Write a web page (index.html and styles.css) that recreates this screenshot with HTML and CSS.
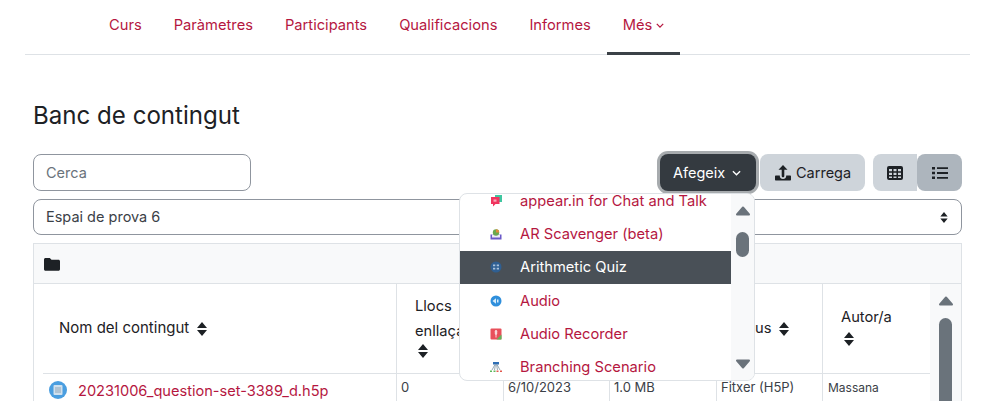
FILE: index.html
```html
<!DOCTYPE html>
<html lang="ca">
<head>
<meta charset="utf-8">
<title>Banc de contingut</title>
<link rel="stylesheet" href="styles.css">
</head>
<body>
<nav class="tabs">
  <a class="tab">Curs</a>
  <a class="tab">Paràmetres</a>
  <a class="tab">Participants</a>
  <a class="tab">Qualificacions</a>
  <a class="tab">Informes</a>
  <a class="tab active">Més <svg class="caret" viewBox="0 0 10 6" width="8" height="5"><path d="M1 1l4 4 4-4" fill="none" stroke="currentColor" stroke-width="1.6"/></svg></a>
</nav>
<main class="content">
  <h1 class="title">Banc de contingut</h1>
  <div class="toolbar">
    <input class="search" placeholder="Cerca">
    <div class="actions">
      <button class="btn add">Afegeix <svg class="caret light" viewBox="0 0 10 6" width="9" height="6"><path d="M1 1l4 4 4-4" fill="none" stroke="currentColor" stroke-width="1.5"/></svg></button>
      <button class="btn upload"><svg viewBox="0 0 16 16" width="16" height="16"><path d="M8 0l4.500 4.800H9.300V11c0 .8-.6 1.300-1.300 1.300S6.700 11.800 6.700 11V4.800H3.500z M1 10.500h3.800v.6c0 1.700 1.400 3 3.200 3s3.200-1.300 3.200-3v-.6H15c.6 0 1 .4 1 1v3c0 .6-.4 1-1 1H1c-.6 0-1-.4-1-1v-3c0-.6.4-1 1-1z" fill="#1d2125"/></svg>Carrega</button>
      <div class="views">
        <button class="view"><svg viewBox="0 0 16 14" width="16" height="14"><path fill-rule="evenodd" d="M2 0h12a2 2 0 0 1 2 2v10a2 2 0 0 1-2 2H2a2 2 0 0 1-2-2V2a2 2 0 0 1 2-2z M2 3v2.300h3V3z M6.500 3v2.300h3V3z M11 3v2.300h3V3z M2 6.800v2.300h3V6.800z M6.500 6.800v2.300h3V6.800z M11 6.800v2.300h3V6.800z M2 10.500V12h3v-1.500z M6.500 10.500V12h3v-1.500z M11 10.500V12h3v-1.500z" fill="#1d2125"/></svg></button>
        <button class="view on"><svg viewBox="0 0 16 14" width="16" height="14"><path d="M0 1h3v2.400H0z M0 5.800h3v2.400H0z M0 10.600h3V13H0z M5 1.300h11v1.800H5z M5 6.100h11v1.800H5z M5 10.900h11v1.800H5z" fill="#1d2125"/></svg></button>
      </div>
    </div>
  </div>
  <div class="select">
    <span>Espai de prova 6</span>
    <svg class="sort" viewBox="0 0 8 12" width="8" height="11"><path d="M4 0l4 4.800H0z M4 12L0 7.200h8z" fill="#1d2125"/></svg>
  </div>
  <section class="bank">
    <div class="crumbs"><svg viewBox="0 0 16 14" width="16" height="14"><path d="M1.500 1h4.300l1.700 1.800h7c.8 0 1.500.7 1.500 1.500v8c0 .8-.7 1.500-1.500 1.500h-13C.7 13.800 0 13.100 0 12.300V2.500C0 1.700.7 1 1.500 1z" fill="#1d2125"/></svg></div>
    <div class="body">
      <div class="grid">
        <div class="th first">Nom del contingut <svg class="sort" viewBox="0 0 10 14" width="10" height="14"><path d="M5 0l5 6H0z M5 14L0 8h10z" fill="#1d2125"/></svg></div>
        <div class="th stack"><span>Llocs<br>enllaçats</span><svg class="sort" viewBox="0 0 10 14" width="10" height="14"><path d="M5 0l5 6H0z M5 14L0 8h10z" fill="#1d2125"/></svg></div>
        <div class="th"></div>
        <div class="th"></div>
        <div class="th">Tipus <svg class="sort" viewBox="0 0 10 14" width="10" height="14"><path d="M5 0l5 6H0z M5 14L0 8h10z" fill="#1d2125"/></svg></div>
        <div class="th stack author"><span>Autor/a</span><svg class="sort" viewBox="0 0 10 14" width="10" height="14"><path d="M5 0l5 6H0z M5 14L0 8h10z" fill="#1d2125"/></svg></div>
        <div class="td name"><svg viewBox="0 0 18 18" width="18" height="18"><circle cx="9" cy="9" r="9" fill="#4a9ee0"/><rect x="4.500" y="4" width="9" height="10" rx="1" fill="#cfe0ee"/><path d="M6 7h6M6 9h6M6 11h6" stroke="#8fa6b8"/></svg><a>20231006_question-set-3389_d.h5p</a></div>
        <div class="td">0</div>
        <div class="td">6/10/2023</div>
        <div class="td">1.0 MB</div>
        <div class="td">Fitxer (H5P)</div>
        <div class="td small">Massana</div>
      </div>
      <div class="rail">
        <svg class="arrow" viewBox="0 0 16 10" width="16" height="10"><path d="M8 1.500l6 7H2z"/></svg>
        <div class="thumb"></div>
      </div>
    </div>
  </section>
</main>
<div class="menu">
  <ul class="items">
    <li class="item"><svg viewBox="0 0 12 12" width="12" height="12"><path d="M5 0h7v7H5z" fill="#3fc6a0"/><path d="M1 2h8.500v7H5.500l-2.500 2.500V9H1z" fill="#f0355f"/><rect x="3.500" y="4.500" width="3" height="2.200" fill="#f7a8b8"/></svg>appear.in for Chat and Talk</li>
    <li class="item"><svg viewBox="0 0 12 12" width="12" height="12"><path d="M.5 6.500h11V11.500H.5z" fill="#6a59c8"/><path d="M2 6.500h8v3H2z" fill="#ece9f8"/><circle cx="6" cy="4.500" r="3.200" fill="#6aa84f"/><path d="M6 1.300a3.200 3.200 0 0 1 3.200 3.200H6z" fill="#e08a3c"/></svg>AR Scavenger (beta)</li>
    <li class="item current"><svg viewBox="0 0 12 12" width="12" height="12"><circle cx="6" cy="6" r="5.500" fill="#2f5f92"/><path d="M3 3.500h2.300v1.800H3z M6.700 3.500H9v1.800H6.700z M3 6.700h2.300v1.800H3z M6.700 6.700H9v1.800H6.700z" fill="#a9c1da"/></svg>Arithmetic Quiz</li>
    <li class="item"><svg viewBox="0 0 12 12" width="12" height="12"><circle cx="6" cy="6" r="5.500" fill="#2f8fdc"/><path d="M2.500 6L6 3.200v5.600z M7 4.500h1.500v3H7z" fill="#d8ecfa"/></svg>Audio</li>
    <li class="item"><svg viewBox="0 0 12 12" width="12" height="12"><rect x=".5" y=".5" width="11" height="11" rx="1" fill="#e8505b"/><rect x="4.800" y="2" width="2.400" height="5" rx="1.200" fill="#f8d5d8"/><path d="M6 7v2.500" stroke="#f8d5d8"/><path d="M11.500 6.500v5h-5z" fill="#5cb85c"/></svg>Audio Recorder</li>
    <li class="item"><svg viewBox="0 0 12 12" width="12" height="12"><rect x="3" y="1" width="6" height="2.500" fill="#2f6fb5"/><path d="M5 3.500L2 9M7 3.500L10 9M5.500 3.500L4.500 9M6.500 3.500L7.500 9" stroke="#6f8596" stroke-width=".7" fill="none"/><path d="M0 9.500h2v1.500H0z M3.500 9.500h2v1.500h-2z" fill="#5cb85c"/><path d="M6.500 9.500h2v1.500h-2z M10 9.500h2v1.500h-2z" fill="#e2574c"/></svg>Branching Scenario</li>
  </ul>
  <div class="menu-rail">
    <svg class="arrow" viewBox="0 0 16 10" width="16" height="10"><path d="M8 1.500l6 7H2z"/></svg>
    <div class="menu-thumb"></div>
    <svg class="arrow down" viewBox="0 0 16 10" width="16" height="10"><path d="M8 8.500l-6-7h12z"/></svg>
  </div>
</div>
</body>
</html>
```

FILE: styles.css
```css
* { box-sizing: border-box; }
html, body { margin: 0; height: 401px; overflow: hidden; background: #fff; }
body { position: relative; font: 15px/1.5 Inter, "Liberation Sans", sans-serif; color: #1d2125; }
svg { display: inline-block; flex: none; }

.tabs { display: flex; height: 55px; margin: 0 13px 0 25px; padding-left: 68px; border-bottom: 1px solid #dee2e6; }
.tab { display: flex; align-items: center; gap: 4px; height: 55px; padding: 0 16px 5px; color: #b5173f; font-size: 14.700px; }
.tab.active { border-bottom: 3px solid #3b4147; padding-bottom: 2px; }

.content { padding: 0 21px 0 33px; }
.title { margin: 44px 0 21px; height: 34px; font-size: 24.100px; font-weight: 400; line-height: 34px; }

.toolbar { display: flex; justify-content: space-between; height: 37px; }
.search { width: 218px; height: 37px; padding: 0 12px; border: 1px solid #8f959e; border-radius: 8px; font: 14.500px Inter, sans-serif; }
.search::placeholder { color: #6a737b; }
.actions { display: flex; }
.btn { display: flex; align-items: center; height: 37px; border: 0; border-radius: 8px; font: 14.500px Inter, sans-serif; color: #1d2125; }
.add { gap: 7px; width: 96px; padding: 0 0 0 13px; background: #343a40; color: #fff; box-shadow: 0 0 0 3px #a7abae; margin-right: 4px; }
.upload { gap: 5px; width: 105px; padding: 0 0 0 15px; background: #ced4da; margin-right: 8px; }
.views { display: flex; }
.view { display: flex; align-items: center; justify-content: center; width: 44px; height: 37px; border: 0; background: #ced4da; border-radius: 8px 0 0 8px; }
.view.on { width: 45px; background: #adb5bd; border-radius: 8px; }

.select { display: flex; align-items: center; justify-content: space-between; height: 36px; margin-top: 8px; padding: 0 13px 0 12px; border: 1px solid #8f959e; border-radius: 8px; font-size: 14.500px; color: #3b4147; }

.bank { margin-top: 8px; border: 1px solid #dee2e6; border-bottom: 0; }
.crumbs { display: flex; align-items: center; height: 40px; padding-left: 10px; background: #f8f9fa; border-bottom: 1px solid #dee2e6; }
.body { display: flex; height: 131px; overflow: hidden; }
.grid { display: grid; flex: 1; grid-template-columns: 353px 107px 106px 107px 106px 108px; grid-template-rows: 90px 40px; margin-left: 9px; }
.th { display: flex; align-items: center; gap: 8px; padding: 0 6px 0 16px; border-left: 1px solid #dee2e6; border-bottom: 1px solid #dee2e6; font-size: 14.700px; }
.th.first { border-left: 0; font-size: 15px; }
.stack { flex-direction: column; align-items: flex-start; justify-content: center; gap: 0; padding: 0 6px 6px 18px; line-height: 25px; }
.stack .sort { margin-left: 3px; }
.author { gap: 2px; }
.td { padding: 4px; border-left: 1px solid #dee2e6; font-size: 13px; color: #3b4147; }
.td.small { font-size: 12px; padding: 5px; }
.name { display: flex; align-items: flex-start; gap: 11px; padding: 7px 0 0 6px; border-left: 0; font-size: 14.600px; }
.name a { color: #b5173f; }
.rail { display: flex; flex-direction: column; align-items: center; width: 32px; padding-top: 12px; background: #f8f9fa; }
.thumb { width: 13px; height: 120px; margin-top: 12px; border-radius: 7px; background: #6a737b; }
.arrow path { fill: #6a737b; stroke: #6a737b; stroke-width: 2; stroke-linejoin: round; }

.menu { position: absolute; left: 459px; top: 193px; display: flex; width: 296px; height: 188px; background: #fff; border: 1px solid #dee2e6; border-radius: 8px; overflow: hidden; }
.items { flex: 1; margin: -10px 0 0; padding: 0; list-style: none; }
.item { display: flex; align-items: center; gap: 18px; height: 33.300px; padding-left: 30px; color: #b5173f; font-size: 14.700px; }
.item.current { background: #495057; color: #fff; }
.menu-rail { display: flex; flex-direction: column; align-items: center; width: 23px; padding-top: 12px; background: #f8f9fa; }
.menu-thumb { width: 13px; height: 25px; margin-top: 16px; border-radius: 7px; background: #6a737b; }
.down { margin-top: auto; margin-bottom: 11px; }
```
